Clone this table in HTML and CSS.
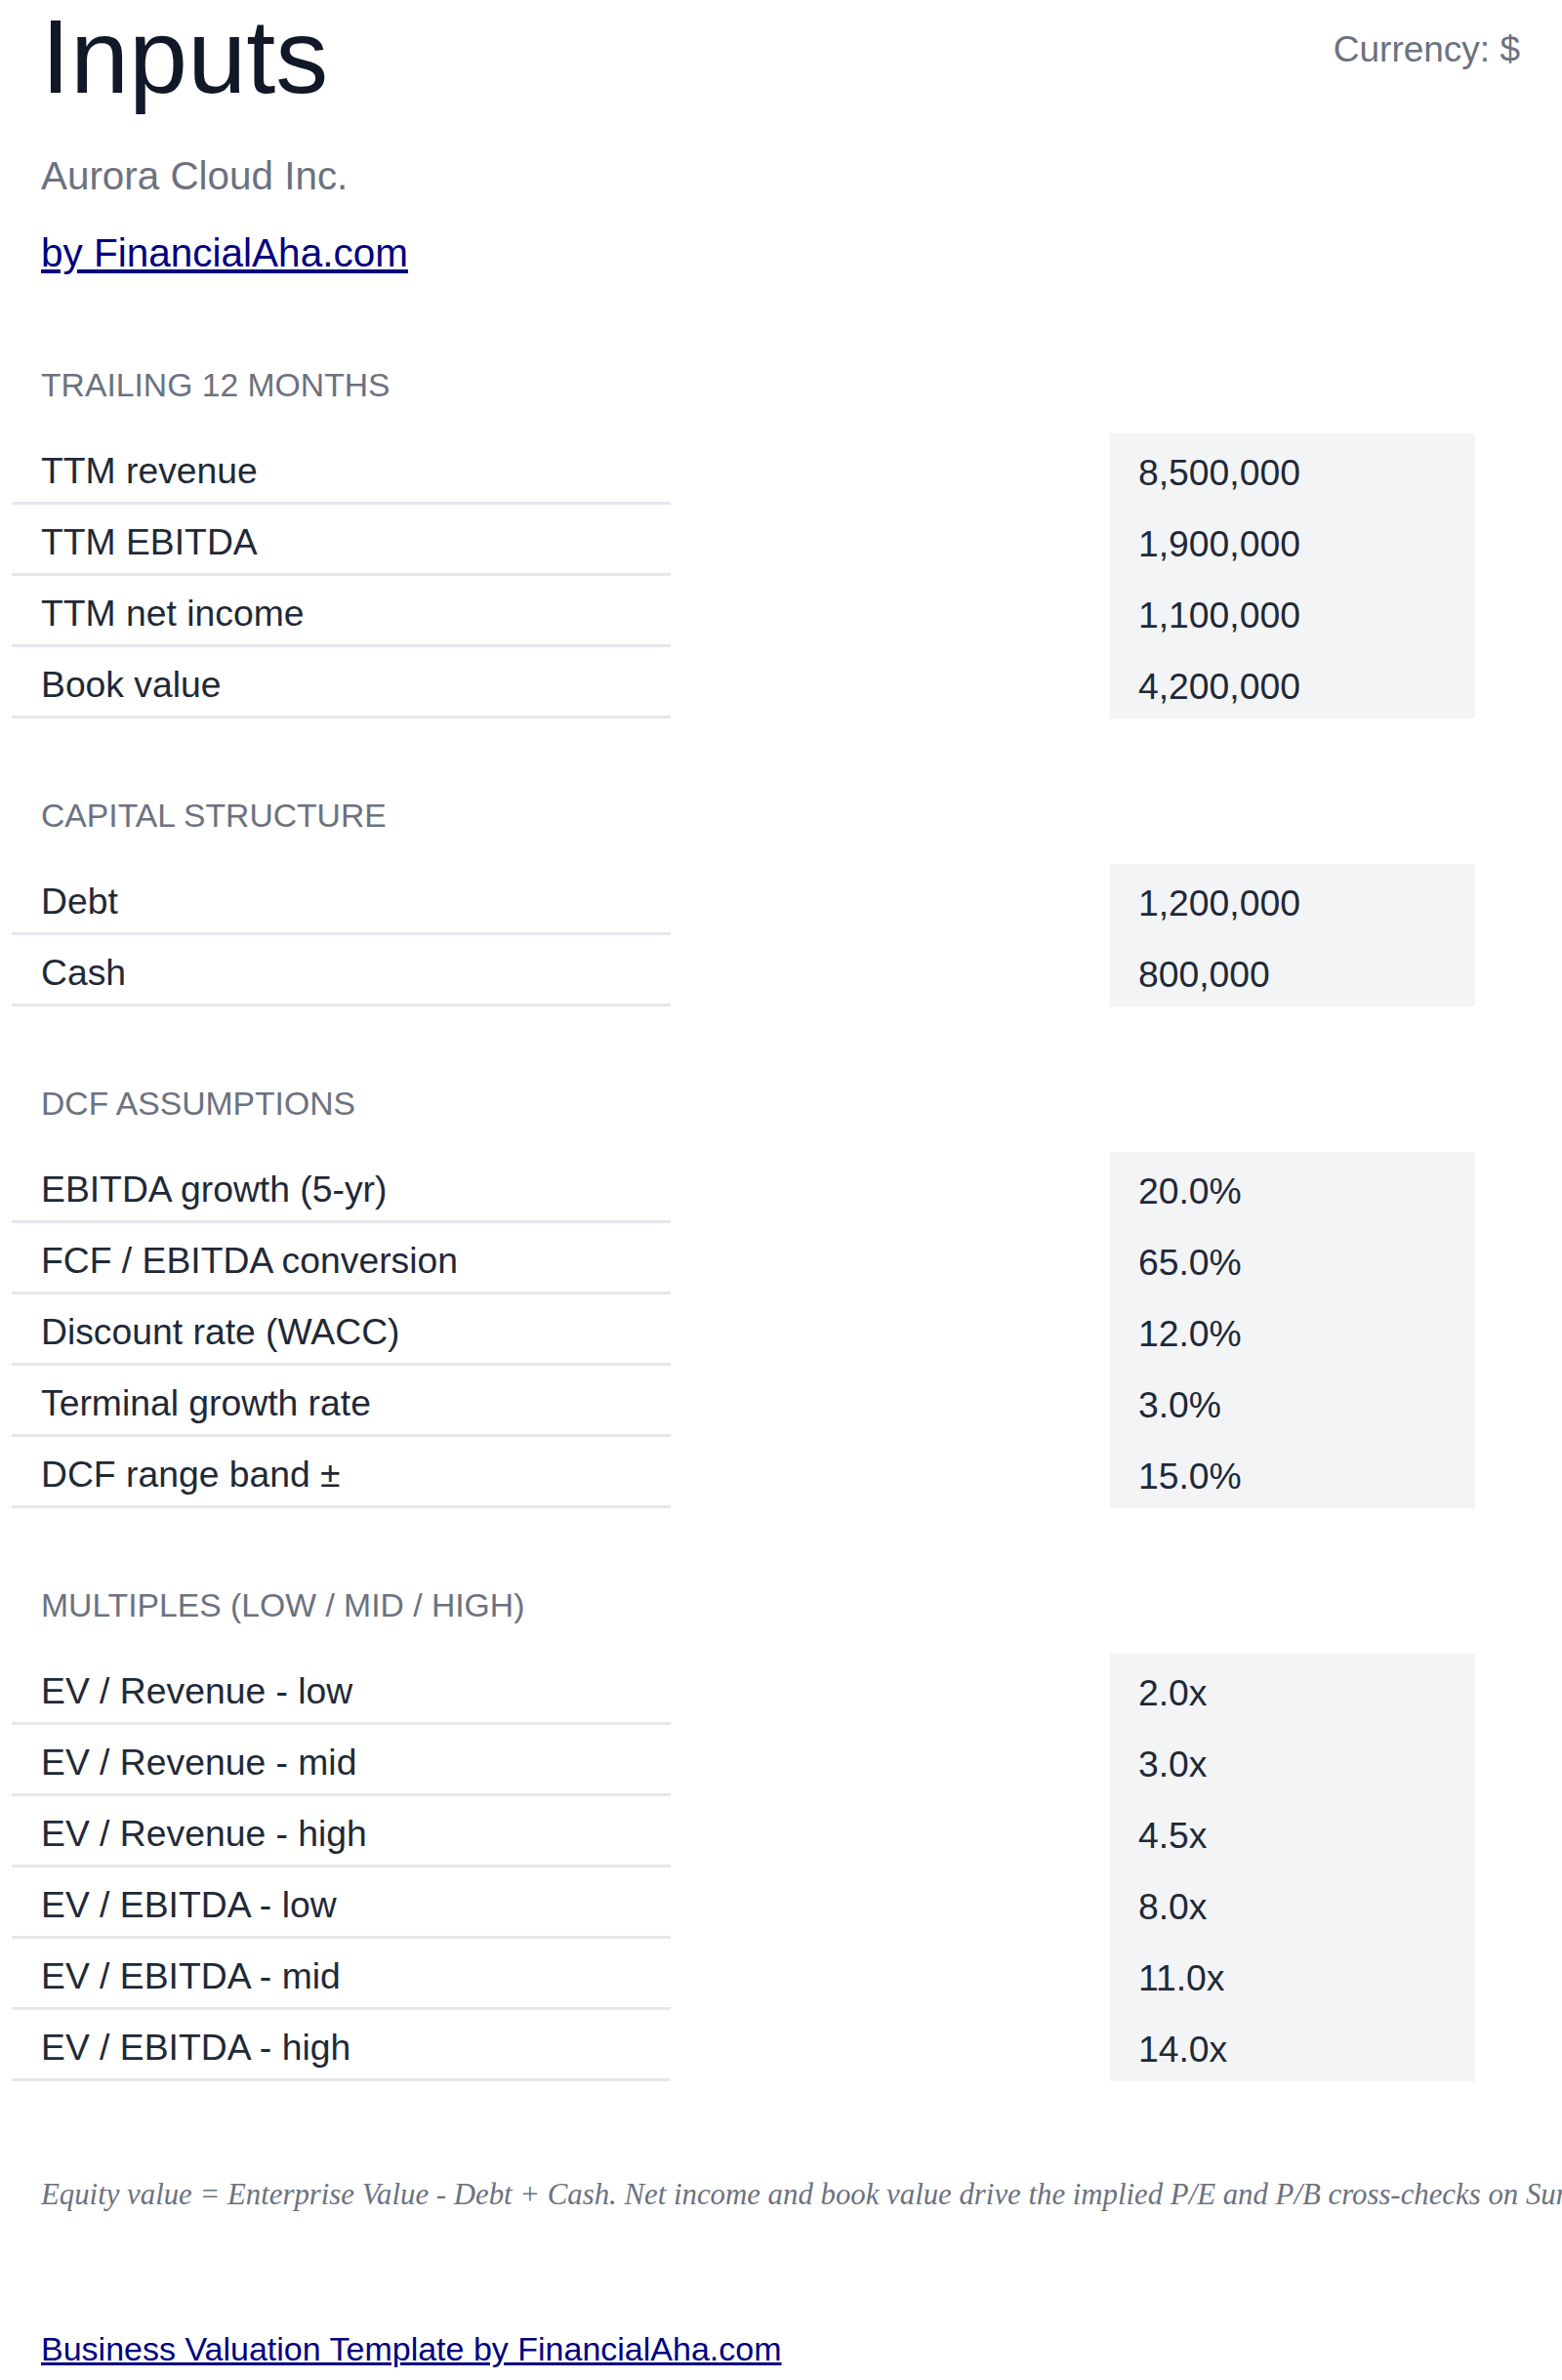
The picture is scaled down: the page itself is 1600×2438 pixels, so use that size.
FILE: index.html
```html
<!DOCTYPE html>
<html lang="en">
<head>
<meta charset="utf-8">
<title>Inputs</title>
<link rel="stylesheet" href="styles.css">
</head>
<body>
<header class="top">
  <div class="top-left">
    <h1 class="title">Inputs</h1>
    <p class="company">Aurora Cloud Inc.</p>
    <a class="brand-link" href="#">by FinancialAha.com</a>
  </div>
  <div class="currency">Currency: $</div>
</header>

<section class="section first">
  <h2 class="section-title">TRAILING 12 MONTHS</h2>
  <div class="rows">
    <div class="row"><div class="label">TTM revenue</div><div class="gap"></div><div class="value">8,500,000</div></div>
    <div class="row"><div class="label">TTM EBITDA</div><div class="gap"></div><div class="value">1,900,000</div></div>
    <div class="row"><div class="label">TTM net income</div><div class="gap"></div><div class="value">1,100,000</div></div>
    <div class="row"><div class="label">Book value</div><div class="gap"></div><div class="value">4,200,000</div></div>
  </div>
</section>

<section class="section">
  <h2 class="section-title">CAPITAL STRUCTURE</h2>
  <div class="rows">
    <div class="row"><div class="label">Debt</div><div class="gap"></div><div class="value">1,200,000</div></div>
    <div class="row"><div class="label">Cash</div><div class="gap"></div><div class="value">800,000</div></div>
  </div>
</section>

<section class="section">
  <h2 class="section-title">DCF ASSUMPTIONS</h2>
  <div class="rows">
    <div class="row"><div class="label">EBITDA growth (5-yr)</div><div class="gap"></div><div class="value">20.0%</div></div>
    <div class="row"><div class="label">FCF / EBITDA conversion</div><div class="gap"></div><div class="value">65.0%</div></div>
    <div class="row"><div class="label">Discount rate (WACC)</div><div class="gap"></div><div class="value">12.0%</div></div>
    <div class="row"><div class="label">Terminal growth rate</div><div class="gap"></div><div class="value">3.0%</div></div>
    <div class="row"><div class="label">DCF range band ±</div><div class="gap"></div><div class="value">15.0%</div></div>
  </div>
</section>

<section class="section">
  <h2 class="section-title">MULTIPLES (LOW / MID / HIGH)</h2>
  <div class="rows">
    <div class="row"><div class="label">EV / Revenue - low</div><div class="gap"></div><div class="value">2.0x</div></div>
    <div class="row"><div class="label">EV / Revenue - mid</div><div class="gap"></div><div class="value">3.0x</div></div>
    <div class="row"><div class="label">EV / Revenue - high</div><div class="gap"></div><div class="value">4.5x</div></div>
    <div class="row"><div class="label">EV / EBITDA - low</div><div class="gap"></div><div class="value">8.0x</div></div>
    <div class="row"><div class="label">EV / EBITDA - mid</div><div class="gap"></div><div class="value">11.0x</div></div>
    <div class="row"><div class="label">EV / EBITDA - high</div><div class="gap"></div><div class="value">14.0x</div></div>
  </div>
</section>

<p class="note">Equity value = Enterprise Value - Debt + Cash. Net income and book value drive the implied P/E and P/B cross-checks on Summary.</p>

<footer class="footer">
  <a class="footer-link" href="#">Business Valuation Template by FinancialAha.com</a>
</footer>
</body>
</html>
```

FILE: styles.css
```css
html {
  overflow-x: hidden;
}

body {
  margin: 0;
  background: #ffffff;
  font-family: "Liberation Sans", Arial, sans-serif;
  color: #1f2937;
}

.top {
  display: flex;
  justify-content: space-between;
  align-items: flex-start;
  padding: 0 43px 0 42px;
}

.title {
  margin: -4px 0 0 0;
  font-size: 108px;
  font-weight: 400;
  line-height: 124px;
  color: #111827;
}

.company {
  margin: 37px 0 0 0;
  font-size: 40.4px;
  line-height: 46px;
  color: #6b7280;
}

.brand-link {
  display: inline-block;
  margin-top: 33px;
  font-size: 40.5px;
  line-height: 46px;
  color: #000080;
}

.currency {
  margin-top: 30px;
  font-size: 37px;
  line-height: 42px;
  color: #6b7280;
}

.section {
  margin-top: 80px;
}

.section.first {
  margin-top: 93px;
}

.section-title {
  margin: 0 0 30px 0;
  padding-left: 42px;
  font-size: 33.7px;
  font-weight: 400;
  line-height: 39px;
  color: #6b7280;
}

.rows {
  margin: 0 89px 0 12px;
}

.row {
  display: flex;
  height: 73px;
  font-size: 37.3px;
}

.label {
  box-sizing: border-box;
  width: 675px;
  padding: 7px 0 0 30px;
  display: flex;
  align-items: center;
  border-bottom: 3px solid #e5e7eb;
  color: #1f2937;
}

.gap {
  flex: 1;
}

.value {
  box-sizing: border-box;
  width: 374px;
  padding: 7px 0 0 29px;
  display: flex;
  align-items: center;
  background: #f3f4f6;
  color: #1f2937;
}

.note {
  margin: 99px 0 0 0;
  padding-left: 42px;
  white-space: nowrap;
  font-family: "Liberation Serif", "Times New Roman", serif;
  font-style: italic;
  font-size: 30.8px;
  line-height: 35px;
  color: #6b7280;
}

.footer {
  margin-top: 121px;
  padding: 0 42px 14px;
}

.footer-link {
  font-size: 34px;
  line-height: 39px;
  color: #000080;
}
```
